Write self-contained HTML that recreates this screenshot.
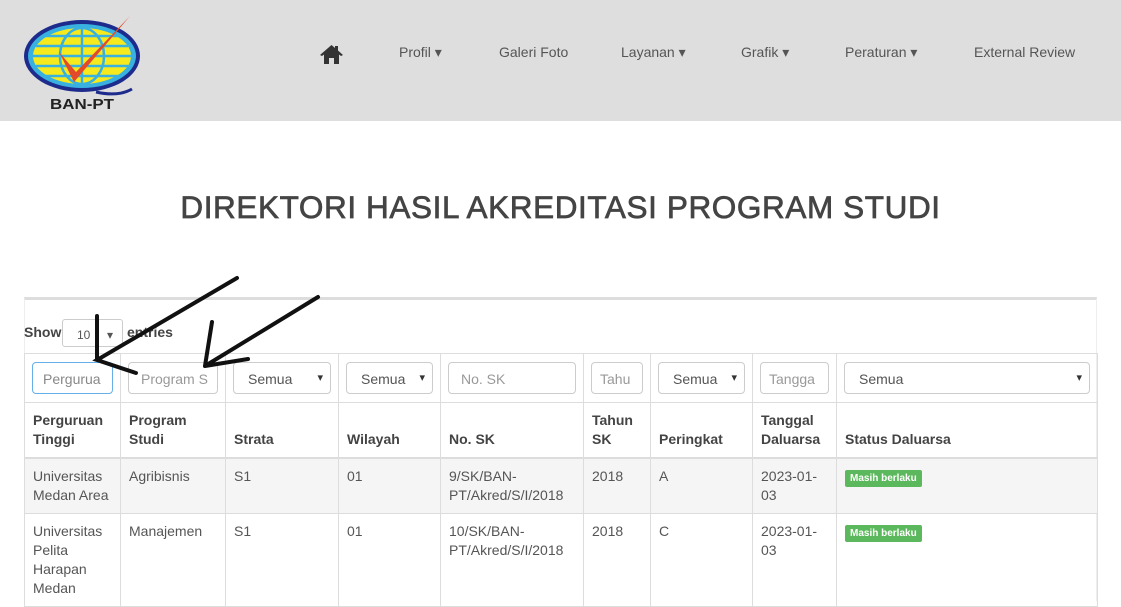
<!DOCTYPE html>
<html><head><meta charset="utf-8"><style>
*{box-sizing:border-box;margin:0;padding:0}
body{width:1121px;height:601px;overflow:hidden;background:#fff;font-family:"Liberation Sans",sans-serif;color:#555;font-size:14px;position:relative}
.hdr{position:absolute;left:0;top:0;width:1121px;height:121px;background:#dedede}
.nav{position:absolute;top:44px;font-size:14px;color:#555}
h1{position:absolute;top:189px;left:0;width:1121px;text-align:center;font-size:31.5px;font-weight:normal;color:#444;-webkit-text-stroke:0.7px #444;letter-spacing:0.6px}
.panel{position:absolute;left:24px;top:297px;width:1073px;height:304px;border-top:3px solid #ddd;border-left:1px solid #eee;border-right:1px solid #eee}
.show{position:absolute;left:24px;top:324px;font-weight:bold;color:#444}
.sel10{position:absolute;left:62px;top:319px;width:61px;height:28px;border:1px solid #ccc;border-radius:3px;background:#fff;font-size:12px;padding:8px 0 0 14px;color:#555}
table{position:absolute;left:24px;top:353px;border-collapse:collapse;table-layout:fixed;width:1073px}
td,th{border:1px solid #ddd;vertical-align:top;padding:8px;text-align:left;line-height:19px;overflow:hidden}
th{color:#444;vertical-align:bottom;font-weight:bold;border-bottom:2px solid #ddd}
.f td{height:49px;padding:8px 7px}
.in{height:32px;border:1px solid #ccc;border-radius:4px;padding:7px 12px;color:#999;font-size:14px;white-space:nowrap;overflow:hidden;position:relative;background:#fff}
.in.s{color:#555;padding-left:14px}
.in.s:after{content:"▾";position:absolute;right:7px;top:6px;font-size:11px;color:#333}
.badge{display:inline-block;background:#5cb85c;color:#fff;font-size:10px;font-weight:bold;padding:2px 5px;border-radius:2px;line-height:13px}
tr.g td{background:#f5f5f5}
</style></head><body>
<div class="hdr">
<svg style="position:absolute;left:22px;top:12px" width="124" height="102" viewBox="0 0 124 102">
<ellipse cx="60" cy="44" rx="58" ry="36" fill="#1d2c8c"/>
<ellipse cx="60" cy="44" rx="54" ry="32" fill="#38b0e0"/>
<ellipse cx="60" cy="44" rx="49" ry="28" fill="#f7ea1c"/>
<g stroke="#38b0e0" stroke-width="2.5" fill="none"><path d="M14 34h92M11 44h98M14 54h92M24 24h72M24 64h72"/><ellipse cx="60" cy="44" rx="22" ry="28"/><path d="M60 16v56"/></g>
<path d="M37 40 L52 70 L108 4 L54 60 Z" fill="#e24a2a"/>
<path d="M74 80 q22 5 36 -3" stroke="#1d2c8c" stroke-width="3" fill="none"/>
<text x="28" y="97" font-family="Liberation Sans" font-weight="bold" font-size="15" fill="#222" textLength="64" lengthAdjust="spacingAndGlyphs">BAN-PT</text>
</svg>
<svg style="position:absolute;left:319px;top:44px" width="25" height="20" viewBox="0 0 25 20"><path d="M12.5 1 L1 11 L3 12 L5 10.5 V20 H10 V14 H15 V20 H20 V10.5 L22 12 L24 11 L19 6.5 V2 H16 V4 Z" fill="#333"/></svg>
<div class="nav" style="left:399px">Profil ▾</div>
<div class="nav" style="left:499px">Galeri Foto</div>
<div class="nav" style="left:621px">Layanan ▾</div>
<div class="nav" style="left:741px">Grafik ▾</div>
<div class="nav" style="left:845px">Peraturan ▾</div>
<div class="nav" style="left:974px">External Review</div>
</div>
<h1>DIREKTORI HASIL AKREDITASI PROGRAM STUDI</h1>
<div class="panel"></div>
<div class="show">Show</div>
<div class="sel10">10 &nbsp;&nbsp;&nbsp;&nbsp;▾</div>
<div class="show" style="left:127px">entries</div>
<table>
<colgroup><col style="width:96px"><col style="width:105px"><col style="width:113px"><col style="width:102px"><col style="width:143px"><col style="width:67px"><col style="width:102px"><col style="width:84px"><col style="width:261px"></colgroup>
<tr class="f"><td><div class="in" style="border-color:#66afe9;color:#888;padding-left:10px">Pergurua</div></td><td><div class="in">Program S</div></td><td><div class="in s">Semua</div></td><td><div class="in s">Semua</div></td><td><div class="in">No. SK</div></td><td><div class="in" style="padding-left:8px">Tahu</div></td><td><div class="in s">Semua</div></td><td><div class="in" style="padding-left:8px">Tangga</div></td><td><div class="in s">Semua</div></td></tr>
<tr style="height:55px"><th>Perguruan Tinggi</th><th>Program Studi</th><th>Strata</th><th>Wilayah</th><th>No. SK</th><th>Tahun SK</th><th>Peringkat</th><th>Tanggal Daluarsa</th><th>Status Daluarsa</th></tr>
<tr class="g" style="height:55px"><td>Universitas Medan Area</td><td>Agribisnis</td><td>S1</td><td>01</td><td>9/SK/BAN-PT/Akred/S/I/2018</td><td>2018</td><td>A</td><td>2023-01-03</td><td><span class="badge">Masih berlaku</span></td></tr>
<tr style="height:90px"><td>Universitas Pelita Harapan Medan</td><td>Manajemen</td><td>S1</td><td>01</td><td>10/SK/BAN-PT/Akred/S/I/2018</td><td>2018</td><td>C</td><td>2023-01-03</td><td><span class="badge">Masih berlaku</span></td></tr>
</table>
<svg style="position:absolute;left:0;top:0" width="1121" height="601"><g stroke="#111" stroke-width="4" fill="none" stroke-linecap="round">
<path d="M237 278 L97 360 L136 373 M97 316 L97 360"/>
<path d="M318 297 L205 366 L248 359 M212 322 L205 366"/>
</g></svg>
</body></html>
